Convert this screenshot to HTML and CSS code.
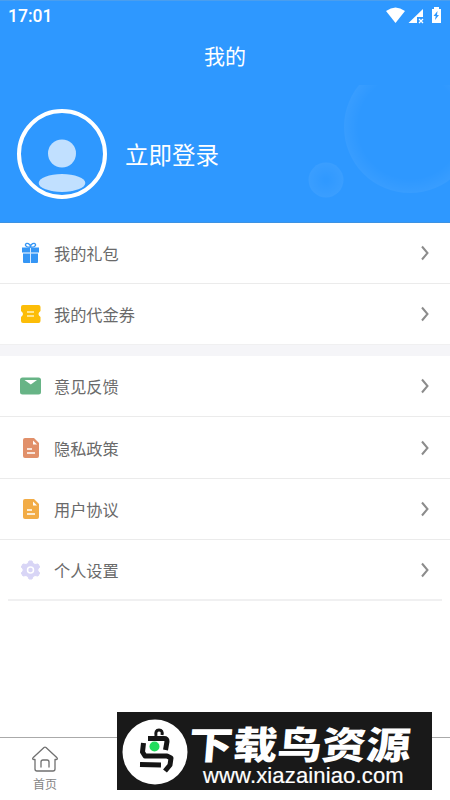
FILE: index.html
```html
<!DOCTYPE html>
<html lang="zh-CN">
<head>
<meta charset="utf-8">
<title>我的</title>
<link rel="stylesheet" href="styles.css">
</head>
<body>
<div class="app">
  <header class="hero">
    <svg class="bubbles" width="150" height="138" viewBox="0 0 150 138">
      <defs>
        <radialGradient id="glow"><stop offset=".78" stop-color="#fff" stop-opacity="0"/><stop offset="1" stop-color="#fff" stop-opacity=".05"/></radialGradient>
        <radialGradient id="glow2"><stop offset=".1" stop-color="#fff" stop-opacity=".01"/><stop offset="1" stop-color="#fff" stop-opacity=".06"/></radialGradient>
      </defs>
      <circle cx="110" cy="42" r="66" fill="url(#glow)"/>
      <circle cx="26" cy="95" r="17.5" fill="url(#glow2)"/>
    </svg>
    <div class="status">
      <span>17:01</span>
      <svg width="58" height="18" viewBox="0 0 58 18" fill="#fff">
        <path d="M0 4Q9.500-3 19 4L9.500 16Z"/>
        <path d="M37 2V10H31V16H22.500Z"/>
        <path d="M33 12l4 4m0-4l-4 4" stroke="#fff" stroke-width="1.300"/>
        <path d="M46 2h2V0h5v2h2v14h-9Z"/>
        <path d="M51.500 4l-4 5h2.200l-.7 4 4-5h-2Z" fill="#2e98ff"/>
      </svg>
    </div>
    <h1>我的</h1>
    <div class="profile">
      <svg width="90" height="90" viewBox="0 0 90 90">
        <circle cx="45" cy="45" r="43" fill="none" stroke="#fff" stroke-width="4"/>
        <circle cx="45" cy="44.500" r="14" fill="#c1e0ff"/>
        <ellipse cx="45" cy="74" rx="23.300" ry="9" fill="#c1e0ff"/>
      </svg>
      <span>立即登录</span>
    </div>
  </header>

  <main>
    <ul class="menu first">
      <li><svg class="icon" viewBox="0 0 24 24"><g fill="#3596f5"><path d="M4 6.500h17v5H4ZM5 12.500h7V22H6q-1 0-1-1ZM13 12.500h7V21q0 1-1 1h-6Z"/></g><path d="M12.500 7v15" stroke="#d7eaff"/><path d="M12.500 6C9 6.500 7 5 7.500 3.500c1-2.500 5-.5 5 2.500Zm0 0c3.500.5 5.500-1 5-2.500-1-2.500-5-.5-5 2.500Z" fill="none" stroke="#3596f5" stroke-width="1.400"/></svg><span>我的礼包</span><svg class="arrow" viewBox="0 0 10 16"><path d="M2 1.500L7.500 8 2 14.500"/></svg></li>
      <li><svg class="icon" viewBox="0 0 24 24"><path d="M5 3h15.500q2 0 2 2v4q-4 3 0 6V19q0 2-2 2H5q-2 0-2-2v-4q4-3 0-6V5q0-2 2-2Z" fill="#fcbd08"/><path d="M9 10h7M9 14h7" stroke="#fff2bd" stroke-width="1.500"/></svg><span>我的代金券</span><svg class="arrow" viewBox="0 0 10 16"><path d="M2 1.500L7.500 8 2 14.500"/></svg></li>
    </ul>
    <ul class="menu">
      <li><svg class="icon" viewBox="0 0 24 24"><rect x="2" y="3.500" width="21" height="17" rx="2.500" fill="#67b486"/><path d="M6.500 6h12.500l-6.200 4.500Z" fill="#fff"/></svg><span>意见反馈</span><svg class="arrow" viewBox="0 0 10 16"><path d="M2 1.500L7.500 8 2 14.500"/></svg></li>
      <li><svg class="icon" viewBox="0 0 24 24"><path d="M7 2h9l5 5v13q0 2-2 2H7q-2 0-2-2V4q0-2 2-2Z" fill="#e1906a"/><path d="M15 4.500L19 8.500H15Z" fill="#fff"/><path d="M9 13h5M9 17h8" stroke="#fff" stroke-width="1.700"/></svg><span>隐私政策</span><svg class="arrow" viewBox="0 0 10 16"><path d="M2 1.500L7.500 8 2 14.500"/></svg></li>
      <li><svg class="icon" viewBox="0 0 24 24"><path d="M7 2h9l5 5v13q0 2-2 2H7q-2 0-2-2V4q0-2 2-2Z" fill="#f2ac46"/><path d="M15 4.500L19 8.500H15Z" fill="#fff"/><path d="M9 13h5M9 17h8" stroke="#fff" stroke-width="1.700"/></svg><span>用户协议</span><svg class="arrow" viewBox="0 0 10 16"><path d="M2 1.500L7.500 8 2 14.500"/></svg></li>
      <li><svg class="icon" viewBox="0 0 24 24"><path d="M11 3h3l1 2.500 2 1 3-.5 1.700 3-1.800 2v2l1.800 2-1.700 3-3-.5-2 1L14 21h-3l-1-2.500-2-1-3 .5-1.700-3 1.800-2v-2l-1.800-2L5 6l3 .5 2-1Z" fill="#d8d5f6" stroke="#d8d5f6" stroke-linejoin="round"/><circle cx="12.500" cy="12" r="3" fill="#d8d5f6" stroke="#fff" stroke-width="1.500"/></svg><span>个人设置</span><svg class="arrow" viewBox="0 0 10 16"><path d="M2 1.500L7.500 8 2 14.500"/></svg></li>
    </ul>
  </main>

  <nav>
    <a><svg width="28" height="28" viewBox="0 0 28 28" fill="none" stroke="#707070" stroke-width="1.300" stroke-linejoin="round" stroke-linecap="round"><path d="M4 14.500H2.500q-1.500-.5-.5-1.700L13 2.500q1-.8 2 0l11 10.300q1 1.200-.5 1.700H24V24q0 2-2 2H6q-2 0-2-2ZM10 22v-5q0-2 2-2h4q2 0 2 2v5"/></svg><span>首页</span></a>
    <a><span>分类</span></a>
    <a><span>找游</span></a>
    <a><span>消息</span></a>
    <a><span>我的</span></a>
  </nav>

  <aside class="banner">
    <svg width="66" height="66" viewBox="0 0 66 66">
      <circle cx="33" cy="33" r="32.500" fill="#fff"/>
      <g fill="none" stroke="#151515" stroke-width="5" stroke-linejoin="round">
        <path d="M26 19.500H42q3 0 3 3L43.500 31M21.500 24L20.500 33 23 37H45L49 39 48 46 43 52M18 45.500L39 46"/>
        <path d="M34 17Q33 11 37 11T40 16" stroke-width="3"/>
      </g>
      <circle cx="32.500" cy="27.500" r="5" fill="#22dc5d"/>
    </svg>
    <div class="brand"><strong>下载鸟资源</strong><span>www.xiazainiao.com</span></div>
  </aside>
</div>
</body>
</html>
```

FILE: styles.css
```css
* { box-sizing: border-box; }
body {
  margin: 0;
  background: #fff;
  font-family: Roboto, "Noto Sans CJK SC", sans-serif;
}
.app {
  position: relative;
  display: flex;
  flex-direction: column;
  width: 450px;
  height: 800px;
  overflow: hidden;
}
.hero {
  position: relative;
  flex: none;
  height: 222.5px;
  background: #2e98ff;
  border-top: 1px solid #4a9eee;
  border-bottom: 1px solid #3d92e2;
  color: #fff;
}
.bubbles { position: absolute; right: 0; bottom: -1px; }
.status {
  display: flex;
  justify-content: space-between;
  align-items: center;
  height: 28px;
  padding: 1px 6px 0 8px;
  font-size: 17.5px;
  font-weight: 500;
}
h1 {
  margin: 13px 0 0;
  font-size: 21px;
  line-height: 30px;
  font-weight: 400;
  text-align: center;
}
.profile {
  position: relative;
  display: flex;
  align-items: center;
  gap: 18px;
  margin: 37px 0 0 17px;
  font-size: 23.5px;
}
.menu {
  margin: 0;
  padding: 0;
  list-style: none;
}
.menu.first { border-bottom: 11px solid #f5f5f8; }
.menu li {
  display: flex;
  align-items: center;
  height: 61.3px;
  padding: 0 20px 0 18px;
  border-bottom: 1px solid #ebebeb;
  color: #6a6a6a;
  font-size: 16.2px;
}
.menu li:last-child { border-bottom-color: #f0f0f1; }
.menu:not(.first) li:last-child { margin: 0 8px; padding: 1px 12px 0 10px; border-bottom-width: 2px; }
.icon { width: 24px; height: 24px; margin-right: 12px; }
.menu span { flex: 1; }
.arrow {
  width: 10px;
  height: 16px;
  fill: none;
  stroke: #8c8c8c;
  stroke-width: 2;
}
nav {
  display: flex;
  height: 63px;
  margin-top: auto;
  border-top: 1px solid #aaa;
  color: #858585;
  font-size: 12px;
}
nav a {
  display: flex;
  flex: 1;
  flex-direction: column;
  align-items: center;
  justify-content: flex-end;
  gap: 3px;
  padding-bottom: 6px;
  line-height: 18px;
}
.banner {
  position: absolute;
  left: 117px;
  top: 712px;
  display: flex;
  gap: 2px;
  width: 315px;
  height: 78px;
  padding: 7px 0 0 5px;
  background: #191919;
  color: #fff;
}
.brand {
  display: flex;
  flex-direction: column;
  width: 226px;
}
.brand strong {
  height: 46px;
  font: 900 38px/48px "Noto Sans CJK SC", sans-serif;
  white-space: nowrap;
  transform: translateX(-3px) scaleX(1.17) skewX(-4deg);
  transform-origin: left bottom;
}
.brand span {
  padding-left: 13px;
  font: 22px/22px "Liberation Sans", sans-serif;
  letter-spacing: .15px;
  -webkit-text-stroke: .2px #fff;
}
```
